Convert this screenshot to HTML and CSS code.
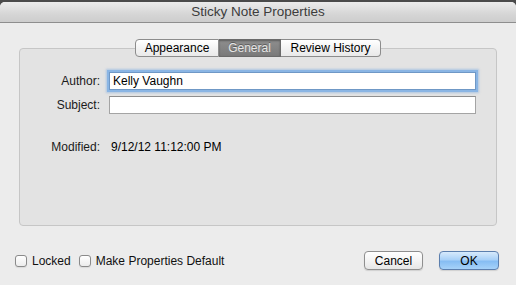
FILE: index.html
```html
<!DOCTYPE html>
<html lang="en">
<head>
    <meta charset="UTF-8">
    <meta name="viewport" content="width=device-width, initial-scale=1.0">
    <title>Sticky Note Properties</title>
    <link rel="stylesheet" href="styles.css">
</head>
<body>

    <div class="window">
        <div class="titlebar">Sticky Note Properties</div>

        <div class="content">
            <div class="tabs">
                <span class="tab tab-appearance">Appearance</span>
                <span class="tab tab-general selected">General</span>
                <span class="tab tab-history">Review History</span>
            </div>

            <div class="group">
                <div class="row">
                    <label class="label" for="author">Author:</label>
                    <input class="field focused" type="text" id="author" value="Kelly Vaughn">
                </div>
                <div class="row">
                    <label class="label" for="subject">Subject:</label>
                    <input class="field" type="text" id="subject" value="">
                </div>
                <div class="row modified">
                    <span class="label">Modified:</span>
                    <span class="value">9/12/12 11:12:00 PM</span>
                </div>
            </div>

            <div class="footer">
                <label class="check"><span class="box"></span>Locked</label>
                <label class="check"><span class="box"></span>Make Properties Default</label>
                <span class="spacer"></span>
                <button class="btn">Cancel</button>
                <button class="btn primary">OK</button>
            </div>
        </div>
    </div>

</body>
</html>
```

FILE: styles.css
```css
body {
    margin: 0;
    background-color: #4a4a4a;
    font-family: "Liberation Sans", Arial, sans-serif;
    font-size: 12px;
    color: #000;
}

.window {
    margin-top: 2px;
    width: 516px;
    height: 283px;
    background-color: #ececec;
    border-radius: 5px 5px 0 0;
    overflow: hidden;
}

.titlebar {
    height: 20px;
    line-height: 20px;
    text-align: center;
    font-size: 13.5px;
    color: #3c3c3c;
    background: linear-gradient(#ebebeb, #d6d6d6 60%, #cdcdcd);
    border-bottom: 1px solid #8e8e8e;
}

.content {
    padding-top: 16px;
}

.tabs {
    display: flex;
    justify-content: flex-start;
    margin-left: 135px;
    margin-bottom: -9px;
    height: 18px;
    position: relative;
    z-index: 1;
}

.tab {
    height: 16px;
    line-height: 16px;
    text-align: center;
    background: linear-gradient(#ffffff, #f3f3f3 50%, #e9e9e9);
    border: 1px solid #8c8c8c;
    border-left: none;
    font-size: 12px;
}

.tab-appearance {
    width: 82px;
    border-left: 1px solid #8c8c8c;
    border-radius: 4px 0 0 4px;
}

.tab-general {
    width: 61px;
}

.tab-history {
    width: 99px;
    border-radius: 0 4px 4px 0;
}

.tab.selected {
    background: linear-gradient(#8e8e8e, #7a7a7a);
    border-color: #6a6a6a;
    color: #e6e6e6;
    text-shadow: 0 -1px 0 #5c5c5c;
    box-shadow: inset 0 1px 2px rgba(0, 0, 0, 0.35);
}

.group {
    margin: 0 19px;
    height: 153px;
    background-color: #e3e3e3;
    border: 1px solid #c6c6c6;
    border-radius: 4px;
    padding-top: 23px;
}

.row {
    display: flex;
    align-items: center;
    height: 18px;
    margin-bottom: 6px;
}

.label {
    width: 80px;
    text-align: right;
    margin-right: 9px;
    color: #1a1a1a;
}

.field {
    width: 367px;
    height: 18px;
    box-sizing: border-box;
    margin: 0;
    padding: 0 3px;
    border: 1px solid #a4a4a4;
    border-top-color: #8e8e8e;
    background-color: #fff;
    font-family: "Liberation Sans", Arial, sans-serif;
    font-size: 12px;
    color: #000;
    outline: none;
}

.field.focused {
    border-color: #6f98c6;
    box-shadow: 0 0 0 2px #8ab5e4, 0 0 2px 3px rgba(120, 170, 225, 0.5);
}

.modified {
    margin-top: 26px;
    height: 14px;
}

.modified .label {
    margin-right: 11px;
}

.footer {
    display: flex;
    align-items: center;
    height: 19px;
    margin-top: 25px;
    padding-left: 15px;
    padding-right: 17px;
}

.check {
    display: flex;
    align-items: center;
    margin-right: 8px;
    color: #111;
}

.box {
    display: inline-block;
    width: 10px;
    height: 10px;
    margin-right: 5px;
    border: 1px solid #8a8a8a;
    border-radius: 3px;
    background: linear-gradient(#ffffff, #ececec);
    box-shadow: 0 1px 1px rgba(0, 0, 0, 0.08);
}

.spacer {
    flex: 1;
}

.btn {
    width: 59px;
    height: 19px;
    margin: 0 0 0 16px;
    padding: 0;
    font-family: "Liberation Sans", Arial, sans-serif;
    font-size: 12px;
    color: #000;
    background: linear-gradient(#ffffff, #f4f4f4 50%, #e6e6e6);
    border: 1px solid #8f8f8f;
    border-radius: 4px;
    box-shadow: 0 1px 1px rgba(0, 0, 0, 0.12);
}

.btn.primary {
    width: 60px;
    background: linear-gradient(#d7eafc, #a9d1f8 45%, #86bdf3 55%, #a6d2f9);
    border-color: #5c7fae;
}
```
